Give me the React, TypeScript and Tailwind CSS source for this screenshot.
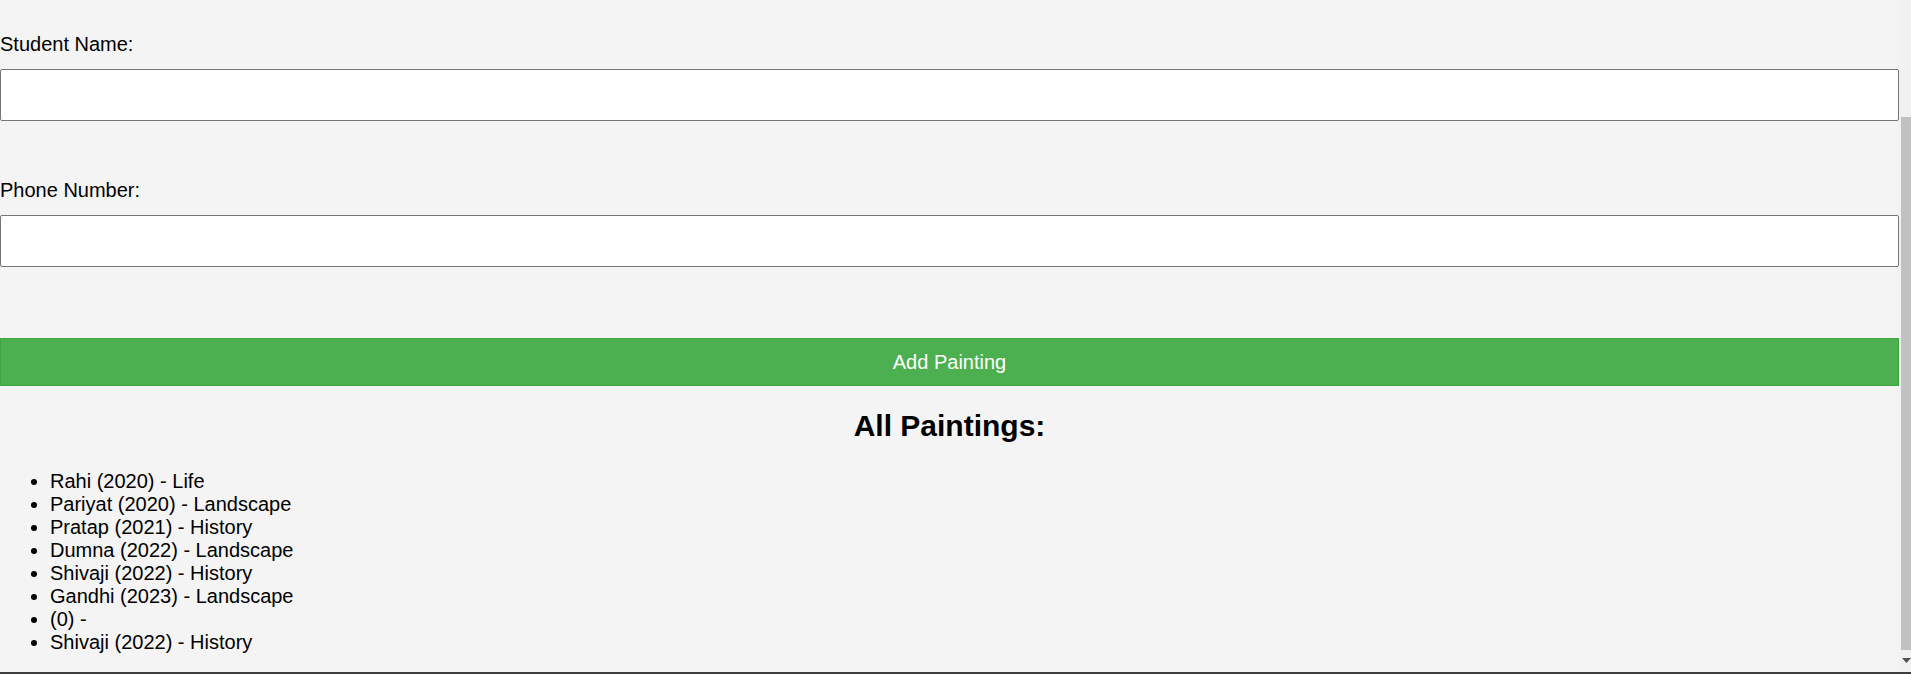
import React from "react";

const paintings = [
  "Rahi (2020) - Life",
  "Pariyat (2020) - Landscape",
  "Pratap (2021) - History",
  "Dumna (2022) - Landscape",
  "Shivaji (2022) - History",
  "Gandhi (2023) - Landscape",
  "(0) -",
  "Shivaji (2022) - History",
];

export default function App() {
  return (
    <div
      className="w-[1911px] h-[674px] flex flex-col overflow-hidden bg-[#f4f4f4] text-black"
      style={{ fontFamily: '"Liberation Sans", Arial, sans-serif' }}
    >
      <div className="flex flex-row h-[672px]">
        <div className="w-[1899px] flex flex-col pt-[33px] text-[20px] leading-[23px]">
          <label className="block h-[23px] mb-[13px]">Student Name:</label>
          <input
            type="text"
            className="block w-full h-[52px] bg-white border border-[#767676] rounded-[2px] outline-none"
          />
          <label className="block h-[23px] mt-[58px] mb-[13px]">Phone Number:</label>
          <input
            type="tel"
            className="block w-full h-[52px] bg-white border border-[#767676] rounded-[2px] outline-none"
          />
          <button className="mt-[71px] w-full h-[48px] bg-[#4caf50] border border-[#3aa83c] text-white text-[20px] leading-[23px] flex items-center justify-center">
            Add Painting
          </button>
          <h2 className="mt-[23px] text-center font-bold text-[30px] leading-[34px]">
            All Paintings:
          </h2>
          <ul className="mt-[27px] list-disc pl-[50px]">
            {paintings.map((p, i) => (
              <li key={i} className="leading-[23px]">
                {p}
              </li>
            ))}
          </ul>
        </div>
        <div className="w-[12px] h-full bg-[#f1f1f1] flex flex-col">
          <div className="h-[117px]" />
          <div className="ml-[2px] w-[10px] h-[533px] bg-[#c1c1c1]" />
          <div className="flex-1 flex items-center justify-end pr-[0px]">
            <svg width="9" height="6" viewBox="0 0 9 6">
              <polygon points="0,0 9,0 4.5,5" fill="#505050" />
            </svg>
          </div>
        </div>
      </div>
      <div className="h-[2px] bg-[#3c3c3c]" />
    </div>
  );
}
